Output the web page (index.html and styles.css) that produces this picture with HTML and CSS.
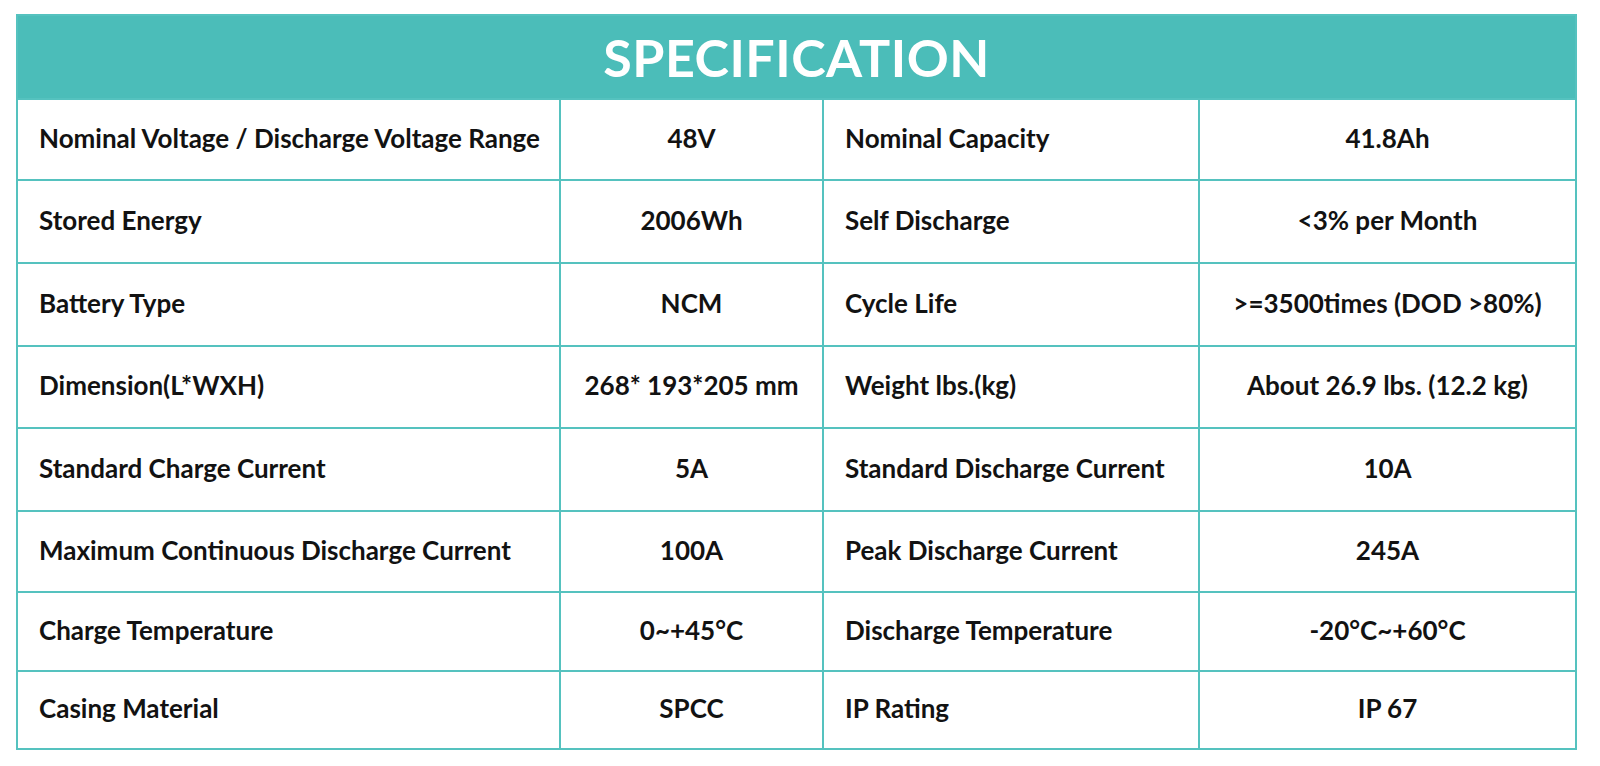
FILE: index.html
```html
<!DOCTYPE html>
<html lang="en">
<head>
<meta charset="utf-8">
<title>Specification</title>
<link rel="stylesheet" href="styles.css">
</head>
<body>
<div class="spec">
  <div class="spec-head">SPECIFICATION</div>
  <div class="spec-grid">
    <div class="label">Nominal Voltage / Discharge Voltage Range</div><div class="value">48V</div><div class="label">Nominal Capacity</div><div class="value">41.8Ah</div>
    <div class="label">Stored Energy</div><div class="value">2006Wh</div><div class="label">Self Discharge</div><div class="value">&lt;3% per Month</div>
    <div class="label">Battery Type</div><div class="value">NCM</div><div class="label">Cycle Life</div><div class="value">&gt;=3500times (DOD &gt;80%)</div>
    <div class="label">Dimension(L*WXH)</div><div class="value">268* 193*205 mm</div><div class="label">Weight lbs.(kg)</div><div class="value">About 26.9 lbs. (12.2 kg)</div>
    <div class="label">Standard Charge Current</div><div class="value">5A</div><div class="label">Standard Discharge Current</div><div class="value">10A</div>
    <div class="label">Maximum Continuous Discharge Current</div><div class="value">100A</div><div class="label">Peak Discharge Current</div><div class="value">245A</div>
    <div class="label">Charge Temperature</div><div class="value">0~+45°C</div><div class="label">Discharge Temperature</div><div class="value">-20°C~+60°C</div>
    <div class="label">Casing Material</div><div class="value">SPCC</div><div class="label">IP Rating</div><div class="value">IP 67</div>
  </div>
</div>
</body>
</html>
```
FILE: styles.css
```css
html, body {
  margin: 0;
  padding: 0;
  background: #ffffff;
}
body {
  padding: 14px 0 0 16px;
  font-family: "Lato", "Open Sans", "Liberation Sans", sans-serif;
  color: #121212;
}
.spec {
  width: 1557px;
  border: 2px solid #55c2bf;
}
.spec-head {
  height: 84px;
  background: #4bbdb9;
  color: #ffffff;
  font-weight: 700;
  font-size: 52px;
  letter-spacing: 0.5px;
  display: flex;
  align-items: center;
  justify-content: center;
  padding-bottom: 1px;
  box-sizing: border-box;
  border-bottom: 2px solid #55c2bf;
}
.spec-grid {
  display: grid;
  grid-template-columns: 541px 261px 374px 375px;
  grid-template-rows: 79px 81px 81px 80px 81px 79px 77px 76px;
  gap: 2px;
  background: #55c2bf;
}
.label, .value {
  background: #ffffff;
  display: flex;
  align-items: center;
  font-weight: 700;
  font-size: 26px;
  padding-bottom: 4px;
  box-sizing: border-box;
  white-space: nowrap;
}
.label {
  padding-left: 21px;
}
.value {
  justify-content: center;
}
```
